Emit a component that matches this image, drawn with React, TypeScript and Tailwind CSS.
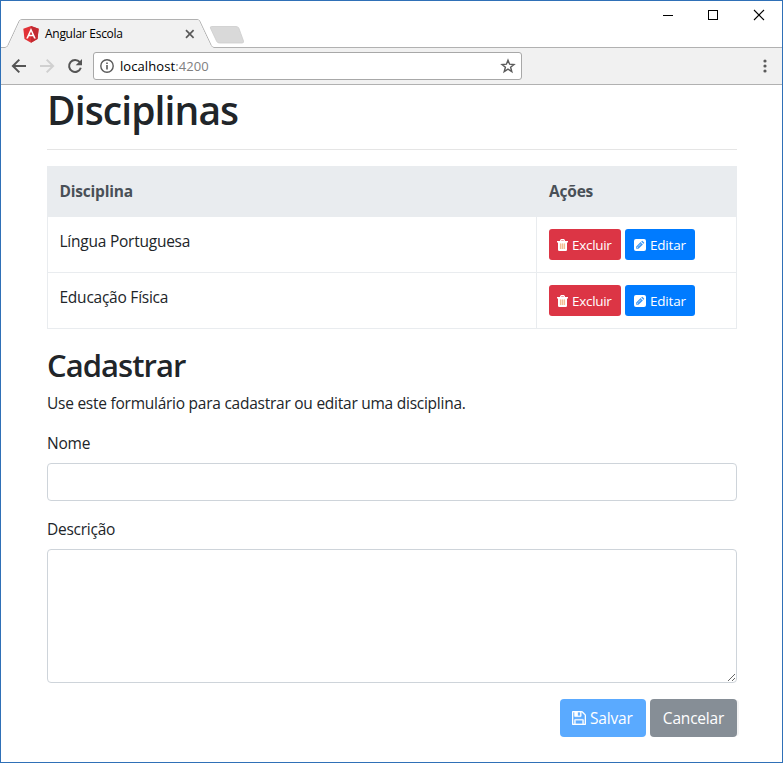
import React from "react";

function AngularLogo() {
  return (
    <svg width="16" height="17" viewBox="0 0 16 17" className="shrink-0">
      <path d="M8 0 L15.7 2.7 L14.5 13 L8 16.7 L1.5 13 L0.3 2.7 Z" fill="#e23237" />
      <path d="M8 0 L15.7 2.7 L14.5 13 L8 16.7 Z" fill="#c22a31" />
      <path fillRule="evenodd" d="M8 2 L3.2 12.6 H5 L5.9 10.2 H10.1 L11 12.6 H12.8 Z M8 5.4 L9.4 8.7 H6.6 Z" fill="#fff" />
    </svg>
  );
}

function TrashIcon() {
  return (
    <svg width="11" height="12" viewBox="0 0 11 12" className="shrink-0">
      <path d="M0 2 H2.8 L3.5 0.5 Q3.7 0 4.2 0 H6.8 Q7.3 0 7.5 0.5 L8.2 2 H11 V3.4 H10 V10.7 Q10 12 8.8 12 H2.2 Q1 12 1 10.7 V3.4 H0 Z" fill="#fff" />
      <path d="M4.2 1.5 H6.8" stroke="#e98a93" strokeWidth="0.8" />
      <path d="M2.8 4.5 H8.2 V10 H2.8 Z" fill="#fbe0cc" />
      <path d="M3.5 4.5V10M5.5 4.5V10M7.5 4.5V10" stroke="#f2bd92" strokeWidth="1" />
    </svg>
  );
}

function EditIcon() {
  return (
    <svg width="12" height="12" viewBox="0 0 12 12" className="shrink-0">
      <rect width="12" height="12" rx="2" fill="#fff" />
      <path d="M2.2 9.8 V7.5 L6.6 3.1 L8.9 5.4 L4.5 9.8 Z M7.2 2.5 L7.8 1.9 Q8.2 1.6 8.6 1.9 L10.1 3.4 Q10.4 3.8 10.1 4.2 L9.5 4.8 Z" fill="#3d98f5" />
      <path d="M3 8 L4.1 9.1 M4 7.6 L7 4.6" stroke="#fff" strokeWidth="0.6" />
    </svg>
  );
}

function SaveIcon() {
  return (
    <svg width="14" height="14" viewBox="0 128 1536 1536" className="shrink-0" fill="#fff" stroke="#fff" strokeWidth="30">
      <path d="M384 1536h768v-384h-768v384zm896 0h128v-896q0-14-10-38.5t-20-34.5l-281-281q-10-10-34-20t-39-10v416q0 40-28 68t-68 28h-576q-40 0-68-28t-28-68v-416h-128v1280h128v-416q0-40 28-68t68-28h832q40 0 68 28t28 68v416zm-384-928v-320q0-13-9.5-22.5t-22.5-9.5h-192q-13 0-22.5 9.5t-9.5 22.5v320q0 13 9.5 22.5t22.5 9.5h192q13 0 22.5-9.5t9.5-22.5zm640 32v928q0 40-28 68t-68 28h-1344q-40 0-68-28t-28-68v-1344q0-40 28-68t68-28h928q40 0 88 20t76 48l280 280q28 28 48 76t20 88z" />
    </svg>
  );
}

function TitleBar() {
  return (
    <div className="relative h-[47px] bg-white">
      <svg className="absolute left-0 top-0" width="781" height="47" viewBox="1 1 781 47">
        <path d="M1 47.5 H5 Q7 47.5 7.8 45.6 L19.2 21 Q20 19.5 22 19.5 H197 Q199 19.5 199.7 21 L211.3 45.6 Q212.2 47.5 214 47.5 H782" fill="none" stroke="#b1b1b1" />
        <path d="M1 48 H5 Q8 47.5 8.4 45.8 L19.9 21 Q20.4 20 22 20 H197 Q198.5 20 199 21 L210.7 45.8 Q211.5 48 214 48 Z" fill="#f1f1f1" />
        <path d="M211.5 26.5 H236 Q238 26.5 238.8 28 L243.5 41 Q244 43 242 43 H219.5 Q217.5 43 216.7 41.4 L210.4 28 Q210 26.5 211.5 26.5 Z" fill="#d9d9d9" stroke="#cdcdcd" strokeWidth="0.8" />
        <path d="M186 30.2 L193.6 37.8 M193.6 30.2 L186 37.8" stroke="#5a5a5a" strokeWidth="1.7" />
        <path d="M663 15.5 H673" stroke="#000" />
        <rect x="708.5" y="10.5" width="9" height="9" fill="none" stroke="#000" />
        <path d="M754 10 L764 20 M764 10 L754 20" stroke="#000" strokeWidth="1.1" />
      </svg>
      <div className="relative flex items-center h-[18px] ml-[22px] top-[24px] gap-[6px]">
        <AngularLogo />
        <span className="text-[12px] leading-4 tracking-[-0.28px] text-black">Angular Escola</span>
      </div>
    </div>
  );
}

function Toolbar() {
  return (
    <div className="flex h-[37px] items-center border-b border-[#b1b1b1] bg-[#f1f1f1]">
      <svg width="92" height="36" viewBox="1 48 92 36" className="shrink-0" fill="none">
        <path d="M26 66 H13.5 M19.3 59.6 L12.9 66 L19.3 72.4" stroke="#555" strokeWidth="2" />
        <path d="M40 66 H52.5 M46.7 59.6 L53.1 66 L46.7 72.4" stroke="#d0d0d0" strokeWidth="2" />
        <path d="M79.8 62.2 A6 6 0 1 0 80.8 67.8" stroke="#555" strokeWidth="2" />
        <path d="M82 59 V65.3 H75.7 Z" fill="#555" />
      </svg>
      <div className="flex h-[28px] w-[429px] items-center rounded-[3px] border border-[#a8a8a8] bg-white pl-[6px] pr-[5px]">
        <svg width="14" height="14" viewBox="0 0 14 14" className="shrink-0" fill="none">
          <circle cx="7" cy="7" r="6.2" stroke="#5a5a5a" strokeWidth="1.4" />
          <path d="M7 6 V10.5 M7 3.5 V5" stroke="#5a5a5a" strokeWidth="1.6" />
        </svg>
        <span className="ml-[6px] text-[13px] leading-5 tracking-[0.08px] text-black">
          localhost<span className="text-[#808080]">:4200</span>
        </span>
        <svg width="16" height="16" viewBox="0 0 16 16" className="ml-auto shrink-0" fill="none">
          <path d="M8 2.2 L9.6 6.2 L14 6.5 L10.6 9.3 L11.8 13.6 L8 11.2 L4.2 13.6 L5.4 9.3 L2 6.5 L6.4 6.2 Z" stroke="#5a5a5a" strokeWidth="1.4" />
        </svg>
      </div>
      <svg width="4" height="14" viewBox="0 0 4 14" className="ml-auto mr-[15.5px]" fill="#5a5a5a">
        <circle cx="2" cy="2" r="1.6" />
        <circle cx="2" cy="7" r="1.6" />
        <circle cx="2" cy="12" r="1.6" />
      </svg>
    </div>
  );
}

function Row({ name }: { name: string }) {
  return (
    <div className="flex h-14 border-b border-[#e9ecef]">
      <div className="w-[490px] border-x border-[#e9ecef] pl-[11.5px] pt-[12px] text-[15.5px] leading-6 tracking-[-0.24px]">{name}</div>
      <div className="flex flex-1 gap-1 border-r border-[#e9ecef] pl-3 pt-3">
        <button className="flex h-[31px] w-[72px] items-center gap-1 rounded-[3px] bg-[#dc3545] pl-[8px] text-[13.5px] tracking-[-0.3px] text-white">
          <TrashIcon /><span className="pt-[2px]">Excluir</span>
        </button>
        <button className="flex h-[31px] w-[70px] items-center gap-1 rounded-[3px] bg-[#007bff] pl-[9px] text-[13.5px] tracking-[-0.2px] text-white">
          <EditIcon /><span className="pt-[2px]">Editar</span>
        </button>
      </div>
    </div>
  );
}

export default function App() {
  return (
    <div className="h-[763px] w-[783px] overflow-hidden border border-[#2f70b7] bg-white font-['Open_Sans','Noto_Sans',sans-serif] text-[#212529]">
      <TitleBar />
      <Toolbar />
      <main className="ml-[46px] w-[690px] pt-px">
        <h1 className="text-[39px] font-[550] leading-[48px] tracking-[-0.9px]">Disciplinas</h1>
        <hr className="mt-[15px] border-[#e5e5e5]" />
        <div className="mt-4">
          <div className="flex h-[51px] bg-[#e9ecef] pt-[13px] text-[15.5px] font-bold leading-6 tracking-[-0.2px] text-[#495057]">
            <div className="w-[490px] pl-[12.5px]">Disciplina</div>
            <div className="pl-3">Ações</div>
          </div>
          <Row name="Língua Portuguesa" />
          <Row name="Educação Física" />
        </div>
        <h2 className="mt-[17px] text-[31px] font-[550] leading-[38px] tracking-[-0.95px]">Cadastrar</h2>
        <p className="mt-[7px] text-[15.5px] leading-6 tracking-[-0.25px]">Use este formulário para cadastrar ou editar uma disciplina.</p>
        <label className="mt-4 block text-[15.5px] leading-6 tracking-[-0.2px]">Nome</label>
        <input className="mt-2 block h-[38px] w-full rounded-[4px] border border-[#ced4da]" />
        <label className="mt-4 block text-[15.5px] leading-6 tracking-[-0.25px]">Descrição</label>
        <textarea className="mt-2 block h-[134px] w-full rounded-[4px] border border-[#ced4da]" />
        <div className="mt-4 flex justify-end gap-1">
          <button className="flex h-[38px] w-[86px] items-center gap-1 rounded-[4px] bg-[#5aaaff] pl-[12px] text-[15.5px] tracking-[-0.2px] text-white">
            <SaveIcon /><span className="pt-[2px]">Salvar</span>
          </button>
          <button className="h-[38px] w-[87px] rounded-[4px] bg-[#868e96] pt-[2px] text-[15.5px] tracking-[-0.2px] text-white shadow-[3px_0_0_-1px_#f3f3f3]">Cancelar</button>
        </div>
      </main>
    </div>
  );
}
